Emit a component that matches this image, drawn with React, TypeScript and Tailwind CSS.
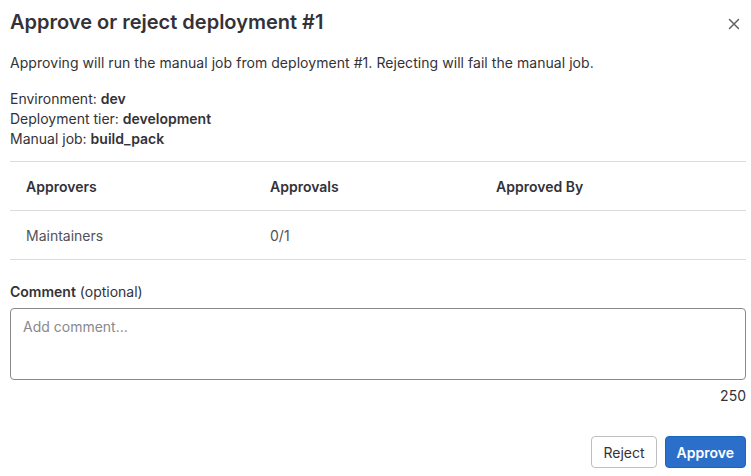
import React from "react";

export default function App() {
  return (
    <div className="w-[751px] h-[476px] bg-white text-[#333238] overflow-hidden" style={{ fontFamily: "Inter, 'Noto Sans', sans-serif" }}>
      <div className="pl-[10px] pr-[5px]">
        <div className="flex items-center justify-between pt-[8px] h-[36px]">
          <h2 className="text-[20px] leading-[28px] font-semibold text-[#333238]">Approve or reject deployment #1</h2>
          <button className="w-[24px] h-[24px] flex items-center justify-center mr-[0px] mt-[4px] text-[#626168]">
            <svg width="12" height="12" viewBox="0 0 12 12" fill="none" stroke="currentColor" strokeWidth="1.5" strokeLinecap="round">
              <path d="M1.5 1.5L10.5 10.5M10.5 1.5L1.5 10.5" />
            </svg>
          </button>
        </div>
        <p className="mt-[17px] text-[14px] leading-[20px] tracking-[0.05px]">Approving will run the manual job from deployment #1. Rejecting will fail the manual job.</p>
        <div className="mt-[16px] text-[14px] leading-[20px]">
          <div>Environment: <span className="font-semibold">dev</span></div>
          <div>Deployment tier: <span className="font-semibold">development</span></div>
          <div>Manual job: <span className="font-semibold">build_pack</span></div>
        </div>
        <table className="mt-[12px] w-[736px] text-[14px] border-collapse">
          <thead>
            <tr className="border-t border-b border-[#dcdcde]">
              <th className="text-left font-semibold h-[49px] pl-[16px] w-[244px]">Approvers</th>
              <th className="text-left font-semibold h-[49px] pl-[16px] w-[226px]">Approvals</th>
              <th className="text-left font-semibold h-[49px] pl-[16px]">Approved By</th>
            </tr>
          </thead>
          <tbody>
            <tr className="border-b border-[#dcdcde]">
              <td className="h-[49px] pl-[16px] text-[#535158]">Maintainers</td>
              <td className="h-[49px] pl-[16px] text-[#535158]">0/1</td>
              <td className="h-[49px] pl-[16px]"></td>
            </tr>
          </tbody>
        </table>
        <div className="mt-[22px] text-[14px] leading-[20px]">
          <span className="font-semibold">Comment</span> <span>(optional)</span>
        </div>
        <textarea
          className="mt-[6px] block w-[736px] h-[72px] border border-[#89888d] rounded-[4px] px-[12px] py-[8px] text-[14px] leading-[20px] resize-none placeholder:text-[#89888d] outline-none"
          placeholder="Add comment..."
        />
        <div className="text-right text-[14px] leading-[20px] mt-[6px]">250</div>
        <div className="flex justify-end gap-[8px] mt-[30px]">
          <button className="h-[32px] px-[11px] rounded-[4px] border border-[#bfbfc3] bg-white text-[14px] text-[#333238]">Reject</button>
          <button className="h-[32px] px-[11px] rounded-[4px] border border-[#1a66bd] bg-[#2b6fca] text-[14px] text-white font-semibold">Approve</button>
        </div>
      </div>
    </div>
  );
}
